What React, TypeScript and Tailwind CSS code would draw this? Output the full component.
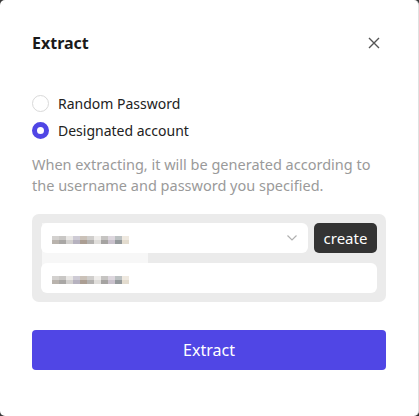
import React from "react";

const mosaic1 = ["#b9b3ad","#a9a7a5","#d2d0ce","#b6b2bf","#ab9e93","#b3b1af","#e0dedb","#a5a3a1","#c9c1cc","#94999b","#e3dccf"];
const mosaic2 = ["#d3d1cf","#c9c7c5","#eae8e6","#cecbd5","#cbc2b9","#d0cecc","#efedeb","#c6c4c2","#ddd7de","#bcc1c2","#efe9e0"];

function Mosaic() {
  return (
    <div className="relative z-10 flex flex-col mt-[3px]">
      <div className="flex">
        {mosaic2.map((c, i) => (
          <span key={i} className="block w-[7px] h-[4px]" style={{ background: c }} />
        ))}
      </div>
      <div className="flex">
        {mosaic1.map((c, i) => (
          <span key={i} className="block w-[7px] h-[4px]" style={{ background: c }} />
        ))}
      </div>
    </div>
  );
}

export default function App() {
  return (
    <div className="w-[419px] h-[416px] bg-[#3a3a3a]" style={{ fontFamily: '"Noto Sans", "Liberation Sans", sans-serif' }}>
      <div className="w-[419px] h-[416px] bg-white rounded-[5px] border-r border-[#e0e0e0] px-8 pt-[28px]">
        <div className="flex items-center justify-between h-[30px]">
          <h1 className="text-[16px] font-bold text-[#1a1a1a]">Extract</h1>
          <svg width="12" height="12" viewBox="0 0 12 12" className="mr-[6px]">
            <path d="M1 1 L11 11 M11 1 L1 11" stroke="#555" strokeWidth="1.4" />
          </svg>
        </div>
        <div className="mt-[36px] flex flex-col gap-[9px]">
          <label className="flex items-center gap-[9px] h-[18px]">
            <span className="w-[17px] h-[17px] rounded-full border border-[#d9d9d9] bg-white" />
            <span className="text-[14px] text-[#222]">Random Password</span>
          </label>
          <label className="flex items-center gap-[9px] h-[18px]">
            <span className="w-[17px] h-[17px] rounded-full border-[5px] border-[#5046e5] bg-white" />
            <span className="text-[14px] text-[#222]">Designated account</span>
          </label>
        </div>
        <p className="mt-[15px] text-[14.5px] leading-[21px] text-[#9a9a9a]">
          When extracting, it will be generated according to the username and password you specified.
        </p>
        <div className="relative mt-[18px] bg-[#ebebeb] rounded-[7px] p-[9px] flex flex-col gap-[10px]">
          <div className="flex gap-[6px]">
            <div className="flex-1 h-[30px] bg-white rounded-[6px] flex items-center justify-between pl-[11px] pr-[10px]">
              <Mosaic />
              <svg width="12" height="8" viewBox="0 0 12 8">
                <path d="M1.5 1.5 L6 6 L10.5 1.5" stroke="#b0b0b0" strokeWidth="1.2" fill="none" />
              </svg>
            </div>
            <button className="h-[30px] w-[63px] bg-[#333333] text-white rounded-[5px] text-[15px]">create</button>
          </div>
          <div className="h-[30px] bg-white rounded-[6px] flex items-center pl-[11px]">
            <Mosaic />
          </div>
          <div className="absolute left-[10px] top-[9px] w-[106px] h-[48px] bg-white/60 pointer-events-none" />
        </div>
        <button className="mt-[28px] w-full h-[40px] bg-[#5046e5] text-white rounded-[4px] text-[16px]">Extract</button>
      </div>
    </div>
  );
}
